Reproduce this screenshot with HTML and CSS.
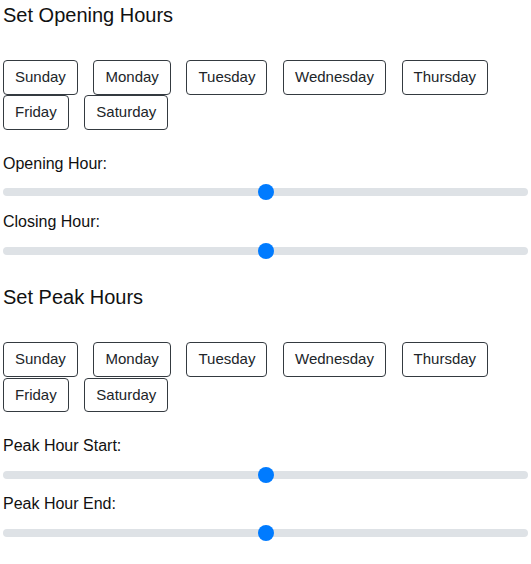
FILE: index.html
```html
<!DOCTYPE html>
<html lang="en">
<head>
<meta charset="utf-8">
<title>Hours</title>
<link rel="stylesheet" href="styles.css">
</head>
<body>
<div class="page">
  <section class="block">
    <h2 class="title">Set Opening Hours</h2>
    <div class="days">
      <button class="day">Sunday</button>
      <button class="day">Monday</button>
      <button class="day">Tuesday</button>
      <button class="day">Wednesday</button>
      <button class="day">Thursday</button>
      <button class="day">Friday</button>
      <button class="day">Saturday</button>
    </div>
    <div class="field">
      <label class="label" for="open">Opening Hour:</label>
      <input class="range" id="open" type="range" min="0" max="24" value="12">
    </div>
    <div class="field">
      <label class="label" for="close">Closing Hour:</label>
      <input class="range" id="close" type="range" min="0" max="24" value="12">
    </div>
  </section>
  <section class="block">
    <h2 class="title">Set Peak Hours</h2>
    <div class="days">
      <button class="day">Sunday</button>
      <button class="day">Monday</button>
      <button class="day">Tuesday</button>
      <button class="day">Wednesday</button>
      <button class="day">Thursday</button>
      <button class="day">Friday</button>
      <button class="day">Saturday</button>
    </div>
    <div class="field">
      <label class="label" for="pstart">Peak Hour Start:</label>
      <input class="range" id="pstart" type="range" min="0" max="24" value="12">
    </div>
    <div class="field">
      <label class="label" for="pend">Peak Hour End:</label>
      <input class="range" id="pend" type="range" min="0" max="24" value="12">
    </div>
  </section>
</div>
</body>
</html>
```
FILE: styles.css
```css
html, body {
  margin: 0;
  padding: 0;
  background: #ffffff;
}
body {
  font-family: "Liberation Sans", Arial, sans-serif;
  color: #212529;
}
.page {
  padding: 0 3px;
}
.block {
  height: 282.3px;
  box-sizing: border-box;
  padding-top: 2.5px;
}
.title {
  margin: 0;
  font-size: 20px;
  font-weight: 400;
  line-height: 24px;
  color: #111;
}
.days {
  margin-top: 33.5px;
  display: flex;
  flex-wrap: wrap;
  column-gap: 15.6px;
  row-gap: 0.8px;
  width: 525px;
}
.day {
  font-family: "Liberation Sans", Arial, sans-serif;
  font-size: 15px;
  line-height: 22.5px;
  padding: 5px 11px;
  border: 1px solid #343a40;
  border-radius: 4px;
  background: #fff;
  color: #212529;
  margin: 0;
}
.field {
  margin-bottom: 9.7px;
}
.days + .field {
  margin-top: 22.2px;
}
.label {
  display: block;
  font-size: 16px;
  line-height: 24px;
  color: #111;
}
.range {
  display: block;
  -webkit-appearance: none;
  appearance: none;
  width: 525px;
  height: 16px;
  margin: 8.5px 0 0;
  padding: 0;
  background: transparent;
}
.range::-webkit-slider-runnable-track {
  height: 8px;
  border-radius: 4px;
  background: #dee2e6;
  border: 0;
}
.range::-webkit-slider-thumb {
  -webkit-appearance: none;
  appearance: none;
  width: 16px;
  height: 16px;
  margin-top: -4px;
  border-radius: 50%;
  background: #007bff;
  border: 0;
}
```
